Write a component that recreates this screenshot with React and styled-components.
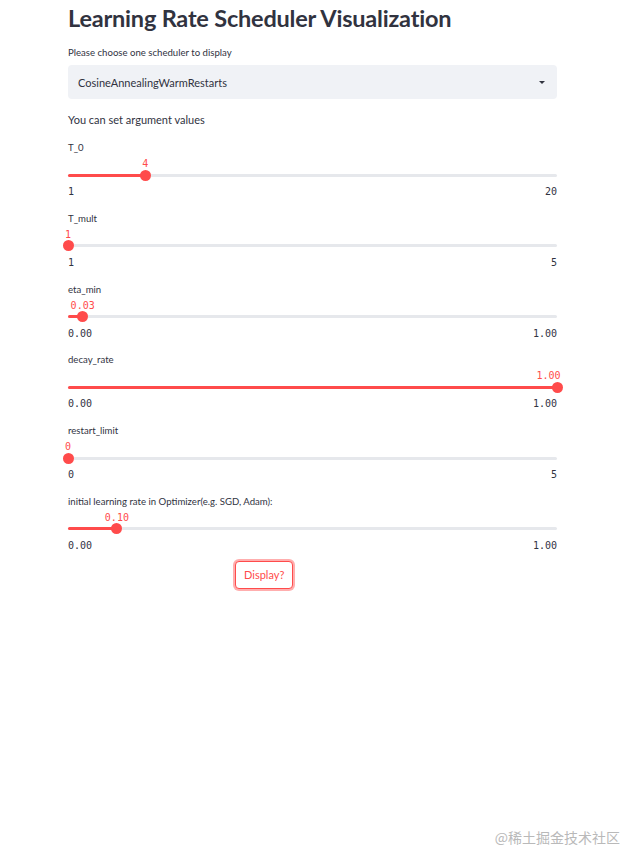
import React from "react";
import styled, { createGlobalStyle } from "styled-components";

const GlobalStyle = createGlobalStyle`
  html, body {
    margin: 0;
    padding: 0;
    background: #ffffff;
  }
  body {
    font-family: "Lato", "Noto Sans", sans-serif;
    color: #31333f;
  }
`;

const Page = styled.main`
  width: 640px;
  min-height: 867px;
  position: relative;
  box-sizing: border-box;
  padding: 3px 0 0 68px;
`;

const Column = styled.div`
  width: 489px;
  display: flex;
  flex-direction: column;
`;

const Title = styled.h1`
  margin: 0;
  font-size: 23.5px;
  font-weight: 700;
  line-height: 30px;
  letter-spacing: -0.2px;
  color: #31333f;
`;

const FieldLabel = styled.div`
  font-size: 9.6px;
  line-height: 14px;
  color: #31333f;
  white-space: nowrap;
`;

const SelectLabel = styled(FieldLabel)`
  margin-top: 13px;
`;

const SelectBox = styled.div`
  margin-top: 5px;
  height: 34px;
  border-radius: 4px;
  background: #f0f2f6;
  display: flex;
  align-items: center;
  justify-content: space-between;
  padding: 0 12px 0 10px;
  font-size: 11px;
  color: #31333f;
`;

const Caret = styled.span`
  width: 0;
  height: 0;
  border-left: 3px solid transparent;
  border-right: 3px solid transparent;
  border-top: 3px solid #31333f;
`;

const Note = styled.p`
  margin: 13px 0 13px;
  font-size: 11px;
  line-height: 16px;
`;

const SliderList = styled.div`
  display: flex;
  flex-direction: column;
  gap: 13.8px;
`;

const SliderBlock = styled.div`
  display: flex;
  flex-direction: column;
`;

const SliderArea = styled.div`
  position: relative;
  height: 28px;
`;

const Track = styled.div`
  position: absolute;
  left: 0;
  right: 0;
  top: 18.5px;
  height: 3px;
  border-radius: 2px;
  background: #e6e8ec;
`;

const Fill = styled.div`
  height: 100%;
  border-radius: 2px;
  background: #ff4b4b;
`;

const Thumb = styled.div`
  position: absolute;
  top: 14.5px;
  width: 11px;
  height: 11px;
  margin-left: -5.5px;
  border-radius: 50%;
  background: #ff4b4b;
`;

const ValueTag = styled.div`
  position: absolute;
  top: 3px;
  font-family: "DejaVu Sans Mono", "Liberation Mono", monospace;
  font-size: 10px;
  line-height: 12px;
  color: #ff4b4b;
  white-space: nowrap;
`;

const Ticks = styled.div`
  display: flex;
  justify-content: space-between;
  margin-top: 3px;
  font-family: "DejaVu Sans Mono", "Liberation Mono", monospace;
  font-size: 10px;
  line-height: 12px;
  color: #31333f;
`;

const ButtonRow = styled.div`
  display: grid;
  grid-template-columns: repeat(3, 1fr);
  gap: 12px;
  margin-top: 9px;
`;

const Button = styled.button`
  grid-column: 2;
  justify-self: start;
  height: 28px;
  padding: 0 8px;
  border: 1px solid #ff4b4b;
  border-radius: 4px;
  background: #ffffff;
  box-shadow: 0 0 0 2px rgba(255, 75, 75, 0.45);
  font-family: "Lato", "Noto Sans", sans-serif;
  font-size: 11px;
  color: #ff4b4b;
  cursor: pointer;
`;

const Watermark = styled.div`
  position: absolute;
  right: 20px;
  bottom: 20px;
  font-family: "Noto Sans CJK SC", "Noto Sans", sans-serif;
  font-size: 14px;
  color: #b9b9b9;
  text-shadow: 0 0 2px #ffffff;
`;

const sliders = [
  { label: "T_0", min: 1, max: 20, value: 4, fmt: (v) => String(v) },
  { label: "T_mult", min: 1, max: 5, value: 1, fmt: (v) => String(v) },
  { label: "eta_min", min: 0, max: 1, value: 0.03, fmt: (v) => v.toFixed(2) },
  { label: "decay_rate", min: 0, max: 1, value: 1, fmt: (v) => v.toFixed(2) },
  { label: "restart_limit", min: 0, max: 5, value: 0, fmt: (v) => String(v) },
  {
    label: "initial learning rate in Optimizer(e.g. SGD, Adam):",
    min: 0,
    max: 1,
    value: 0.1,
    fmt: (v) => v.toFixed(2),
  },
];

const Slider = ({ label, min, max, value, fmt }) => {
  const frac = (value - min) / (max - min);
  const pct = `${frac * 100}%`;
  // near the right end the tag is pulled left so it stays inside the track
  const shift = frac > 0.95 ? -85 : -50;
  return (
    <SliderBlock>
      <FieldLabel>{label}</FieldLabel>
      <SliderArea>
        <ValueTag style={{ left: pct, transform: `translateX(${shift}%)` }}>
          {fmt(value)}
        </ValueTag>
        <Track>
          <Fill style={{ width: pct }} />
        </Track>
        <Thumb style={{ left: pct }} />
      </SliderArea>
      <Ticks>
        <span>{fmt(min)}</span>
        <span>{fmt(max)}</span>
      </Ticks>
    </SliderBlock>
  );
};

const App = () => {
  return (
    <>
      <GlobalStyle />
      <Page>
        <Column>
          <Title>Learning Rate Scheduler Visualization</Title>
          <SelectLabel>Please choose one scheduler to display</SelectLabel>
          <SelectBox>
            <span>CosineAnnealingWarmRestarts</span>
            <Caret />
          </SelectBox>
          <Note>You can set argument values</Note>
          <SliderList>
            {sliders.map((s) => (
              <Slider key={s.label} {...s} />
            ))}
          </SliderList>
          <ButtonRow>
            <Button>Display?</Button>
          </ButtonRow>
        </Column>
        <Watermark>@稀土掘金技术社区</Watermark>
      </Page>
    </>
  );
};

export default App;
